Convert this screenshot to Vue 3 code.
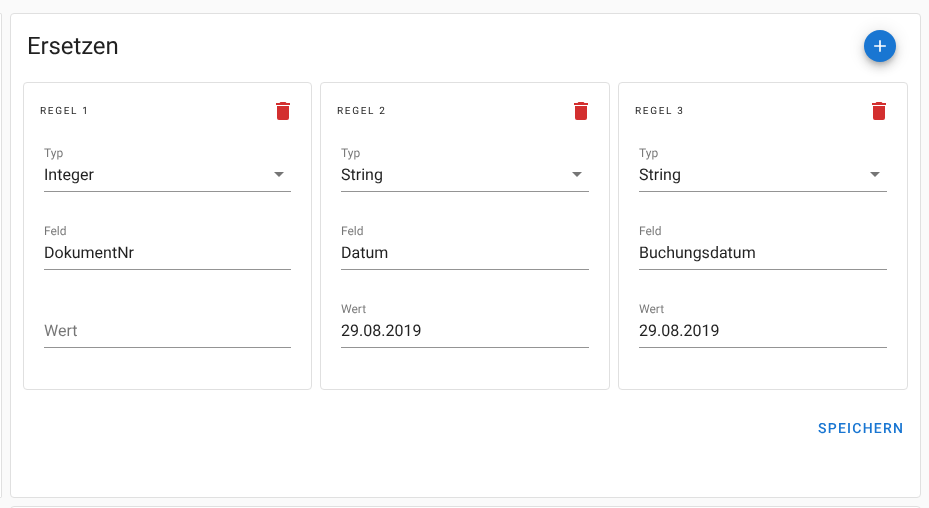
<script setup>
const rules = [
  { name: 'REGEL 1', typ: 'Integer', feld: 'DokumentNr', wert: '' },
  { name: 'REGEL 2', typ: 'String', feld: 'Datum', wert: '29.08.2019' },
  { name: 'REGEL 3', typ: 'String', feld: 'Buchungsdatum', wert: '29.08.2019' },
]
</script>

<template>
  <div class="page">
    <div class="row">
      <div class="sliver"></div>
      <section class="card">
        <header class="head">
          <h1 class="title">Ersetzen</h1>
          <button class="fab" type="button" aria-label="Hinzufügen">
            <svg viewBox="0 0 24 24" width="20" height="20"><path fill="#fff" d="M19,13H13V19H11V13H5V11H11V5H13V11H19V13Z" /></svg>
          </button>
        </header>
        <div class="rules">
          <article v-for="r in rules" :key="r.name" class="rule">
            <div class="rule-head">
              <span class="rule-name">{{ r.name }}</span>
              <svg class="trash" viewBox="0 0 24 24" width="24" height="24"><path fill="#d32f2f" d="M19,4H15.5L14.5,3H9.5L8.5,4H5V6H19M6,19A2,2 0 0,0 8,21H16A2,2 0 0,0 18,19V7H6V19Z" /></svg>
            </div>
            <div class="field">
              <span class="label">Typ</span>
              <div class="value">
                <span class="text">{{ r.typ }}</span>
                <svg class="caret" viewBox="0 0 24 24" width="24" height="24"><path fill="#757575" d="M7,10L12,15L17,10H7Z" /></svg>
              </div>
            </div>
            <div class="field">
              <span class="label">Feld</span>
              <div class="value"><span class="text">{{ r.feld }}</span></div>
            </div>
            <div class="field">
              <span v-if="r.wert" class="label">Wert</span>
              <span v-else class="label empty"></span>
              <div class="value" :class="{ placeholder: !r.wert }"><span class="text">{{ r.wert || 'Wert' }}</span></div>
            </div>
          </article>
        </div>
        <div class="actions">
          <button class="save" type="button"><span class="text">SPEICHERN</span></button>
        </div>
      </section>
    </div>
    <div class="next"></div>
  </div>
</template>

<style>
html, body { margin: 0; background: #fafafa; }
</style>

<style scoped>
.page {
  width: 929px;
  height: 508px;
  overflow: hidden;
  box-sizing: border-box;
  padding-top: 13px;
  background: #fafafa;
  font-family: Roboto, "Liberation Sans", sans-serif;
  color: rgba(0, 0, 0, 0.87);
  text-rendering: geometricPrecision;
}
.row { display: flex; height: 485px; }
.sliver {
  width: 2px;
  margin-right: 8px;
  box-sizing: border-box;
  background: #fff;
  border: 1px solid #e0e0e0;
  border-left: 0;
  border-radius: 0 4px 4px 0;
}
.card {
  width: 911px;
  box-sizing: border-box;
  background: #fff;
  border: 1px solid #e0e0e0;
  border-radius: 4px;
  padding: 0 12px;
}
.head {
  height: 68px;
  display: flex;
  justify-content: space-between;
  align-items: flex-start;
  padding: 0 12px 0 4px;
}
.title {
  margin: 16px 0 0;
  font-size: 24px;
  line-height: 32px;
  font-weight: 400;
  letter-spacing: -0.1px;
  color: rgba(0, 0, 0, 0.87);
  will-change: transform;
}
.fab {
  width: 32px;
  height: 32px;
  margin-top: 16px;
  padding: 0;
  border: 0;
  border-radius: 50%;
  background: #1976d2;
  display: flex;
  align-items: center;
  justify-content: center;
  box-shadow: 0 3px 5px -1px rgba(0,0,0,.2), 0 6px 10px 0 rgba(0,0,0,.14), 0 1px 18px 0 rgba(0,0,0,.12);
}
.rules { display: flex; gap: 8px; margin-left: -0.33px; }
.rule {
  flex: 1 1 0;
  height: 308px;
  box-sizing: border-box;
  border: 1px solid #e0e0e0;
  border-radius: 4px;
  padding: 0 20px;
}
.rule-head {
  height: 54px;
  margin: 0 -4px;
  display: flex;
  justify-content: space-between;
  align-items: center;
}
.rule-name {
  font-size: 10px;
  letter-spacing: 1.67px;
  line-height: 16px;
  padding-top: 4px;
  color: rgba(0, 0, 0, 0.87);
  will-change: transform;
}
.trash { margin-right: 0.5px; position: relative; top: 1px; }
.field { height: 78px; box-sizing: border-box; padding-top: 8px; }
.label {
  display: block;
  height: 16px;
  font-size: 12px;
  line-height: 16px;
  color: rgba(0, 0, 0, 0.54);
  will-change: transform;
}
.value {
  position: relative;
  height: 31px;
  font-size: 16px;
  line-height: 27px;
  box-sizing: border-box;
  border-bottom: 1px solid #949494;
}
.text { display: inline-block; will-change: transform; }
.placeholder { color: rgba(0, 0, 0, 0.54); }
.caret { position: absolute; right: 0; top: 1px; }
.actions { display: flex; justify-content: flex-end; padding-top: 21px; }
.save {
  padding: 0 4px;
  height: 36px;
  border: 0;
  background: transparent;
  color: #1976d2;
  font: 500 14px/36px Roboto, "Liberation Sans", sans-serif;
  letter-spacing: 1.25px;
  text-rendering: geometricPrecision;
}
.next {
  margin: 8px 0 0 10px;
  width: 911px;
  height: 40px;
  box-sizing: border-box;
  background: #fff;
  border: 1px solid #e0e0e0;
  border-radius: 4px;
}
</style>
